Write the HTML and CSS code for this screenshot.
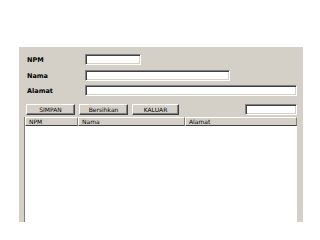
FILE: index.html
```html
<!DOCTYPE html>
<html>
<head>
<meta charset="utf-8">
<link rel="stylesheet" href="styles.css">
</head>
<body>
<div class="panel">
  <div class="form">
    <div class="row r1"><span class="label">NPM</span><input class="field w-npm" type="text"></div>
    <div class="row r2"><span class="label">Nama</span><input class="field w-nama" type="text"></div>
    <div class="row r3"><span class="label">Alamat</span><input class="field w-alamat" type="text"></div>
  </div>
  <div class="actions">
    <button class="btn b1">SIMPAN</button>
    <button class="btn b2">Bersihkan</button>
    <button class="btn b3">KALUAR</button>
    <input class="field w-search" type="text">
  </div>
  <div class="table">
    <div class="thead">
      <div class="th c1">NPM</div>
      <div class="th c2">Nama</div>
      <div class="th c3">Alamat</div>
    </div>
    <div class="tbody"></div>
  </div>
</div>
</body>
</html>
```
FILE: styles.css
```css
html, body {
  margin: 0;
  padding: 0;
  background: #ffffff;
}
body {
  width: 320px;
  height: 240px;
  overflow: hidden;
  font-family: "DejaVu Sans", Tahoma, sans-serif;
}
.panel {
  margin: 47px 0 0 19px;
  width: 284px;
  height: 175px;
  background: #d4d0c8;
  box-sizing: border-box;
  padding: 7px 6px 0 5px;
  display: flex;
  flex-direction: column;
}
.form {
  display: flex;
  flex-direction: column;
  padding-left: 3px;
}
.row {
  display: flex;
  align-items: center;
}
.r2 { margin-top: 5px; }
.r3 { margin-top: 4px; }
.label {
  width: 58px;
  font-size: 6.5px;
  font-weight: bold;
  color: #000;
}
.field {
  box-sizing: border-box;
  height: 11px;
  margin: 0;
  padding: 0;
  background: #fff;
  border: 1px solid;
  border-color: #808080 #ffffff #ffffff #808080;
  box-shadow: inset 1px 1px 0 #404040, inset -1px -1px 0 #d4d0c8;
  outline: none;
}
.w-npm { width: 56px; }
.w-nama { width: 145px; }
.w-alamat { width: 213px; }
.actions {
  display: flex;
  align-items: center;
  margin-top: 8px;
  margin-left: 2px;
}
.btn {
  box-sizing: border-box;
  height: 11px;
  padding: 0;
  margin: 0 4px 0 0;
  background: #d4d0c8;
  font-family: "DejaVu Sans", Tahoma, sans-serif;
  font-size: 6px;
  color: #000;
  border: 1px solid;
  border-color: #ffffff #404040 #404040 #ffffff;
  box-shadow: inset -1px -1px 0 #808080;
  line-height: 9px;
}
.b1 { width: 49px; }
.b2 { width: 49px; }
.b3 { width: 47px; }
.w-search {
  width: 52px;
  margin-left: auto;
  height: 11px;
}
.table {
  margin-top: 2px;
  flex: 1;
  display: flex;
  flex-direction: column;
  background: #fff;
  border-left: 1px solid #808080;
  box-shadow: inset 1px 0 0 #404040;
}
.thead {
  display: flex;
  height: 9px;
  background: #d4d0c8;
}
.th {
  box-sizing: border-box;
  height: 9px;
  font-size: 6px;
  line-height: 8px;
  padding-left: 3px;
  border: 1px solid;
  border-color: #ffffff #808080 #808080 #ffffff;
  border-bottom-color: #404040;
  color: #000;
}
.c1 { width: 53px; }
.c2 { width: 107px; }
.c3 { flex: 1; }
.tbody {
  flex: 1;
  background: #fff;
}
```
